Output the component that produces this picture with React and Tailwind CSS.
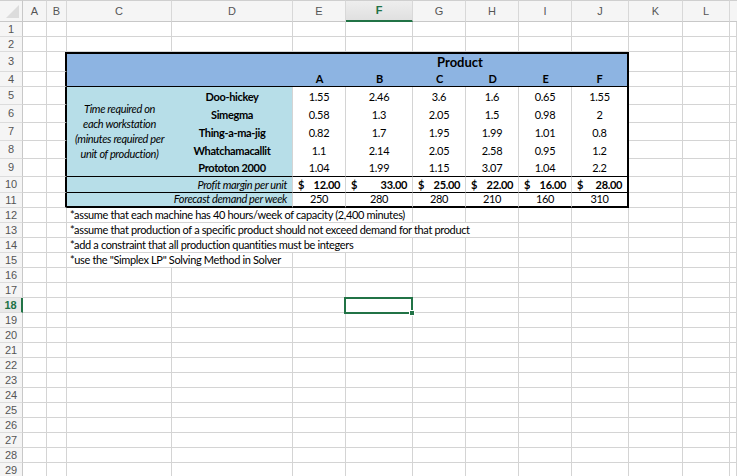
import React from 'react';

// cell styles
const grid = 'border-r border-b border-[#d4d4d4]';
const bThick = 'border-b border-b-[#d4d4d4] border-r-2 border-r-black';
const blue = 'bg-[#8db4e2]';
const aqua = 'bg-[#b7dee8]';

const columns = ['A', 'B', 'C', 'D', 'E', 'F', 'G', 'H', 'I', 'J', 'K', 'L'];
const products = ['A', 'B', 'C', 'D', 'E', 'F'];

const workstations = [
  { name: 'Doo-hickey', v: ['1.55', '2.46', '3.6', '1.6', '0.65', '1.55'] },
  { name: 'Simegma', v: ['0.58', '1.3', '2.05', '1.5', '0.98', '2'] },
  { name: 'Thing-a-ma-jig', v: ['0.82', '1.7', '1.95', '1.99', '1.01', '0.8'] },
  { name: 'Whatchamacallit', v: ['1.1', '2.14', '2.05', '2.58', '0.95', '1.2'] },
  { name: 'Prototon 2000', v: ['1.04', '1.99', '1.15', '3.07', '1.04', '2.2'] },
];
const profit = ['12.00', '33.00', '25.00', '22.00', '16.00', '28.00'];
const demand = ['250', '280', '280', '210', '160', '310'];

// note text spills over the empty cells to its right
const notes = [
  { text: '*assume that each machine has 40 hours/week of capacity (2,400 minutes)', span: 'col-span-4', blanks: 7 },
  { text: '*assume that production of a specific product should not exceed demand for that product', span: 'col-span-6', blanks: 5 },
  { text: '*add a constraint that all production quantities must be integers', span: 'col-span-4', blanks: 7 },
  { text: '*use the "Simplex LP" Solving Method in Solver', span: 'col-span-2', blanks: 9 },
];

const RowHead = ({ n, active }) =>
  active ? (
    <div className="flex items-center justify-center bg-[#e9e9e9] border-b border-b-[#dcdcdc] border-r-2 border-r-[#217346] text-[11px] tracking-normal font-bold text-[#217346] font-['Liberation_Sans',sans-serif]">
      {n}
    </div>
  ) : (
    <div className="flex items-center justify-center bg-[#f5f5f5] border-b border-b-[#dcdcdc] border-r border-r-[#c8c8c8] text-[11px] tracking-normal text-[#555] font-['Liberation_Sans',sans-serif]">
      {n}
    </div>
  );

const Blanks = ({ count }) =>
  Array.from({ length: count }).map((_, i) => <div key={i} className={grid} />);

const SelectedCell = () => (
  <div className={`relative ${grid}`}>
    <div className="absolute -left-[2px] -top-[1px] w-[69px] h-[17px] border-2 border-[#217346]" />
    <div className="absolute left-[63px] top-[12px] w-[6px] h-[6px] bg-[#217346] border border-white" />
  </div>
);

export default function App() {
  const rows = [];

  // rows 1 and 2
  for (const n of [1, 2]) {
    rows.push(<RowHead key={`h${n}`} n={n} />);
    rows.push(<Blanks key={`b${n}`} count={13} />);
  }

  // row 3
  rows.push(
    <React.Fragment key="r3">
      <RowHead n={3} />
      <div className={grid} />
      <div className={bThick} />
      <div className={`col-span-2 row-span-2 ${blue} border-t-2 border-t-black border-b border-b-black`} />
      <div className={`col-span-6 ${blue} border-t-2 border-t-black border-r-2 border-r-black flex items-center justify-center font-bold text-[13px] tracking-normal`}>
        Product
      </div>
      <Blanks count={3} />
    </React.Fragment>
  );

  // row 4
  rows.push(
    <React.Fragment key="r4">
      <RowHead n={4} />
      <div className={grid} />
      <div className={bThick} />
      {products.map((p, i) => (
        <div
          key={p}
          className={
            i === 5
              ? `${blue} border-b border-b-black border-r-2 border-r-black flex items-end justify-center font-bold leading-[14px]`
              : `${blue} border-b border-b-black flex items-end justify-center font-bold leading-[14px]`
          }
        >
          {p}
        </div>
      ))}
      <Blanks count={3} />
    </React.Fragment>
  );

  // rows 5-9
  workstations.forEach((w, r) => {
    const last = r === 4;
    rows.push(
      <React.Fragment key={`w${r}`}>
        <RowHead n={5 + r} />
        <div className={grid} />
        <div className={bThick} />
        {r === 0 && (
          <div className={`row-span-5 ${aqua} border-b border-b-black flex items-center justify-center text-center italic leading-[15px] pb-[2px]`}>
            Time required on
            <br />
            each workstation
            <br />
            (minutes required per
            <br />
            unit of production)
          </div>
        )}
        <div
          className={
            last
              ? `${aqua} border-r border-r-[#d4d4d4] border-b border-b-black flex items-end justify-center font-bold leading-[14px] pb-[1px]`
              : `${aqua} border-r border-r-[#d4d4d4] flex items-end justify-center font-bold leading-[14px] pb-[1px]`
          }
        >
          {w.name}
        </div>
        {w.v.map((v, i) => (
          <div
            key={i}
            className={
              (i === 5 ? 'border-r-2 border-r-black ' : 'border-r border-r-[#d4d4d4] ') +
              (last ? 'border-b border-b-black ' : '') +
              'flex items-end justify-center leading-[14px] pb-[1px]'
            }
          >
            {v}
          </div>
        ))}
        <Blanks count={3} />
      </React.Fragment>
    );
  });

  // row 10 - profit
  rows.push(
    <React.Fragment key="r10">
      <RowHead n={10} />
      <div className={grid} />
      <div className={bThick} />
      <div className={`col-span-2 ${aqua} border-r border-r-[#d4d4d4] border-b border-b-black flex items-end justify-end pr-[5px] italic leading-[14px]`}>
        Profit margin per unit
      </div>
      {profit.map((v, i) => (
        <div
          key={i}
          className={
            (i === 5 ? 'border-r-2 border-r-black ' : 'border-r border-r-[#d4d4d4] ') +
            'border-b border-b-black flex items-end justify-between px-[5px] font-bold leading-[14px]'
          }
        >
          <span>$</span>
          <span>{v}</span>
        </div>
      ))}
      <Blanks count={3} />
    </React.Fragment>
  );

  // row 11 - demand
  rows.push(
    <React.Fragment key="r11">
      <RowHead n={11} />
      <div className={grid} />
      <div className={bThick} />
      <div className={`col-span-2 ${aqua} border-r border-r-[#d4d4d4] border-b-2 border-b-black flex items-end justify-end pr-[5px] italic leading-[14px]`}>
        Forecast demand per week
      </div>
      {demand.map((v, i) => (
        <div
          key={i}
          className={
            (i === 5 ? 'border-r-2 border-r-black ' : 'border-r border-r-[#d4d4d4] ') +
            'border-b-2 border-b-black flex items-end justify-center leading-[14px]'
          }
        >
          {v}
        </div>
      ))}
      <Blanks count={3} />
    </React.Fragment>
  );

  // rows 12-15 - notes
  notes.forEach((note, i) => {
    rows.push(
      <React.Fragment key={`n${i}`}>
        <RowHead n={12 + i} />
        <div className={grid} />
        <div className={grid} />
        <div className={`${note.span} ${grid} flex items-end pl-[3px] whitespace-nowrap leading-[14px]`}>{note.text}</div>
        <Blanks count={note.blanks} />
      </React.Fragment>
    );
  });

  // rows 16-29
  for (let n = 16; n <= 29; n++) {
    rows.push(
      <React.Fragment key={`e${n}`}>
        <RowHead n={n} active={n === 18} />
        {n === 18 ? (
          <>
            <Blanks count={5} />
            <SelectedCell />
            <Blanks count={7} />
          </>
        ) : (
          <Blanks count={13} />
        )}
      </React.Fragment>
    );
  }

  return (
    <div className="w-[737px] h-[476px] overflow-hidden bg-white text-black text-[11px] tracking-[-0.35px] font-['Lato',sans-serif]">
      <div className="grid grid-cols-[23px_24px_20px_105px_121px_53px_67px_53px_53px_53px_57px_54px_47px_1fr] grid-rows-[22px_15px_15px_20px_15px_18px_18px_18px_18px_18px_16px_15px_repeat(18,15px)]">
        {/* column headers */}
        <div className="relative bg-[#f5f5f5] border-t border-t-[#cfcfcf] border-b border-b-[#c8c8c8] border-r border-r-[#c8c8c8]">
          <svg className="absolute right-[2px] bottom-[2px]" width="15" height="15" viewBox="0 0 15 15">
            <polygon points="1,14 14,1 14,14" fill="#dcdcdc" />
          </svg>
        </div>
        {columns.map((c) =>
          c === 'F' ? (
            <div
              key={c}
              className="flex items-center justify-center bg-linear-to-b from-[#eeeeee] to-[#e0e0e0] border-t border-t-[#cfcfcf] border-b-2 border-b-[#217346] border-r border-r-[#d8d8d8] text-[11px] tracking-normal font-bold text-[#217346] font-['Liberation_Sans',sans-serif]"
            >
              {c}
            </div>
          ) : (
            <div
              key={c}
              className="flex items-center justify-center bg-[#f5f5f5] border-t border-t-[#cfcfcf] border-b border-b-[#c8c8c8] border-r border-r-[#d8d8d8] text-[11px] tracking-normal text-[#555] font-['Liberation_Sans',sans-serif]"
            >
              {c}
            </div>
          )
        )}
        <div className="bg-[#f5f5f5] border-t border-t-[#cfcfcf] border-b border-b-[#c8c8c8]" />
        {rows}
      </div>
    </div>
  );
}
